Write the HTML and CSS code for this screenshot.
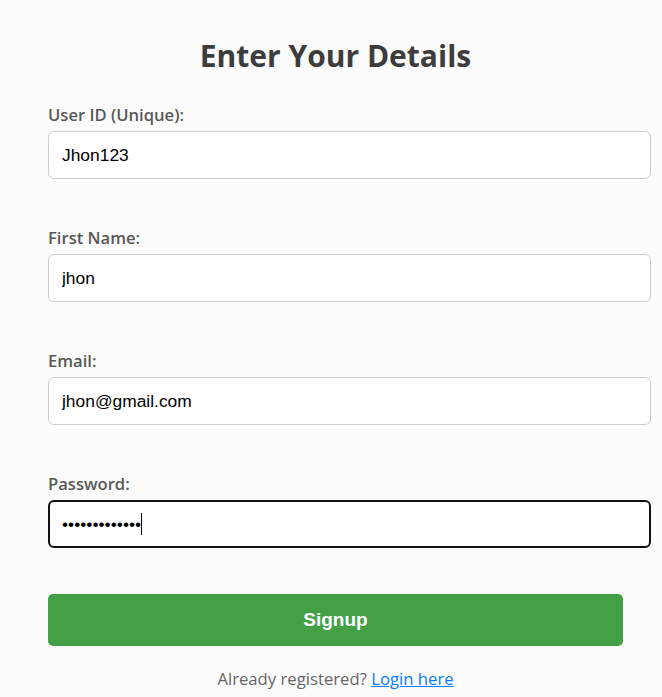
FILE: index.html
```html
<!DOCTYPE html>
<html lang="en">
<head>
<meta charset="utf-8">
<title>Signup</title>
<link rel="stylesheet" href="styles.css">
</head>
<body>
<div class="container">
  <h1 class="title">Enter Your Details</h1>
  <form class="form">
    <div class="field">
      <label class="label" for="uid">User ID (Unique):</label>
      <input class="input" id="uid" type="text" value="Jhon123">
    </div>
    <div class="field">
      <label class="label" for="fname">First Name:</label>
      <input class="input" id="fname" type="text" value="jhon">
    </div>
    <div class="field">
      <label class="label" for="email">Email:</label>
      <input class="input" id="email" type="email" value="jhon@gmail.com">
    </div>
    <div class="field field-last">
      <label class="label" for="pw">Password:</label>
      <div class="input-wrap">
        <input class="input input-focused" id="pw" type="password" value="jhonpassword1">
        <span class="caret"></span>
      </div>
    </div>
    <button class="btn" type="button">Signup</button>
  </form>
  <p class="footer">Already registered? <a class="link" href="#">Login here</a></p>
</div>
</body>
</html>
```

FILE: styles.css
```css
html, body {
  margin: 0;
  padding: 0;
  background: #fcfcfc;
}
.container {
  width: 575px;
  margin-left: 48px;
  padding-top: 34px;
}
.title {
  margin: 0 0 26px;
  text-align: center;
  font-family: "Open Sans", sans-serif;
  font-weight: 700;
  font-size: 30px;
  line-height: 44px;
  color: #3d3d3d;
}
.form {
  margin: 0;
}
.field {
  margin-bottom: 48px;
}
.field-last {
  margin-bottom: 46px;
}
.label {
  display: block;
  margin-bottom: 5px;
  font-family: "Open Sans", sans-serif;
  font-weight: 600;
  font-size: 16.6px;
  line-height: 22px;
  color: #585858;
}
.input-wrap {
  position: relative;
}
.input {
  display: block;
  width: 575px;
  box-sizing: content-box;
  height: 22px;
  padding: 12px 13px 12px 13px;
  margin: 0;
  border: 1px solid #ccc;
  border-radius: 6px;
  background: #fff;
  font-family: "Liberation Sans", Arial, sans-serif;
  font-size: 17.4px;
  color: #000;
  outline: none;
}
.input-focused {
  border: 2px solid #111;
  padding: 11px 12px;
}
.caret {
  position: absolute;
  left: 93px;
  top: 13px;
  width: 1px;
  height: 22px;
  background: #000;
}
.btn {
  display: block;
  width: 575px;
  height: 52px;
  margin: 0;
  padding: 0;
  border: none;
  border-radius: 5px;
  background: #43a047;
  color: #fff;
  font-family: "Liberation Sans", Arial, sans-serif;
  font-weight: 700;
  font-size: 19px;
  cursor: pointer;
}
.footer {
  margin: 22px 0 0;
  text-align: center;
  font-family: "Open Sans", sans-serif;
  font-size: 16.7px;
  line-height: 22px;
  color: #666;
}
.link {
  color: #0a7cff;
  text-decoration: underline;
}
```
